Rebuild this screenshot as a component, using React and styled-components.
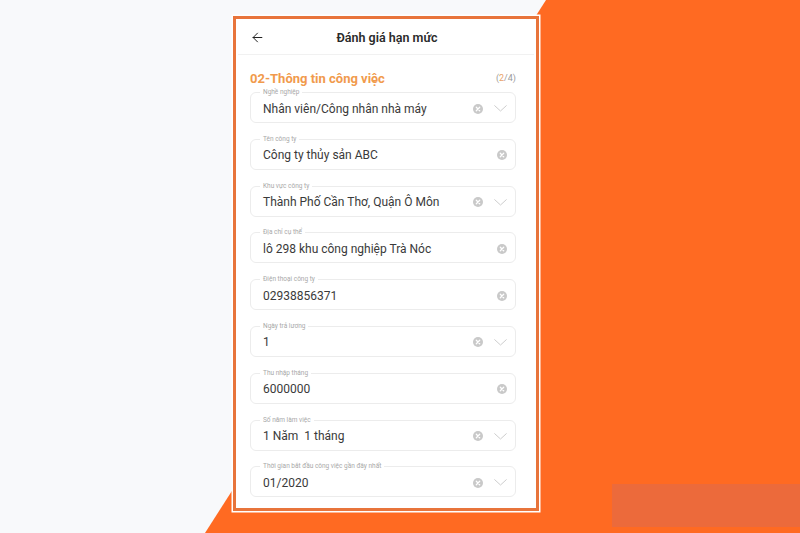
import React from 'react';
import styled, { createGlobalStyle } from 'styled-components';
import { ArrowLeft } from 'lucide-react';

const GlobalStyle = createGlobalStyle`
  html, body {
    margin: 0;
    padding: 0;
    background: #f8f9fb;
  }
  * { box-sizing: border-box; }
`

const fields = [
    { label: 'Nghề nghiệp', value: 'Nhân viên/Công nhân nhà máy', select: true },
    { label: 'Tên công ty', value: 'Công ty thủy sản ABC' },
    { label: 'Khu vực công ty', value: 'Thành Phố Cần Thơ, Quận Ô Môn', select: true },
    { label: 'Địa chỉ cụ thể', value: 'lô 298 khu công nghiệp Trà Nóc' },
    { label: 'Điện thoại công ty', value: '02938856371' },
    { label: 'Ngày trả lương', value: '1', select: true },
    { label: 'Thu nhập tháng', value: '6000000' },
    { label: 'Số năm làm việc', value: '1 Năm  1 tháng', select: true },
    { label: 'Thời gian bắt đầu công việc gần đây nhất', value: '01/2020', select: true },
];

const ClearIcon = () => (
    <svg width="10" height="10" viewBox="0 0 10 10">
        <circle cx="5" cy="5" r="5" fill="#c9c9c9" />
        <path d="M3.3 3.3 L6.7 6.7 M6.7 3.3 L3.3 6.7" stroke="#fff" strokeWidth="1.3" strokeLinecap="round" />
    </svg>
)

const Chevron = () => (
    <svg width="13" height="7" viewBox="0 0 13 7">
        <path d="M0.7 0.7 L6.5 6 L12.3 0.7" fill="none" stroke="#cdcdcd" strokeWidth="1" strokeLinecap="round" />
    </svg>
)

const Field = ({ label, value, select }) => (
    <FieldBox>
        <FieldLabel>{label}</FieldLabel>
        <FieldValue>{value}</FieldValue>
        <Icons>
            <ClearIcon />
            {select && <Chevron />}
        </Icons>
    </FieldBox>
)

const App = () => {
    return (
        <Page>
            <GlobalStyle />
            <Card>
                <Header>
                    <BackButton><ArrowLeft size={15} strokeWidth={1.6} /></BackButton>
                    <Title>Đánh giá hạn mức</Title>
                </Header>
                <Body>
                    <SectionRow>
                        <SectionTitle>02-Thông tin công việc</SectionTitle>
                        <Step>(<span>2</span>/4)</Step>
                    </SectionRow>
                    <FieldList>
                        {fields.map(f => <Field key={f.label} {...f} />)}
                    </FieldList>
                </Body>
            </Card>
            <Patch />
        </Page>
    )
}

export default App;

const Page = styled.div`
    position: relative;
    width: 800px;
    height: 533px;
    overflow: hidden;
    background: #f8f9fb;
    padding: 16px 0 0 233px;
    font-family: Roboto, "Noto Sans", sans-serif;

    &::before {
        content: "";
        position: absolute;
        inset: 0;
        background: #ff6a22;
        clip-path: polygon(546px 0, 800px 0, 800px 533px, 205px 533px);
    }
`

const Patch = styled.div`
    position: absolute;
    left: 612px;
    top: 484px;
    width: 188px;
    height: 43px;
    background: #ec6a3b;
`

const Card = styled.div`
    position: relative;
    z-index: 1;
    width: 306px;
    height: 495px;
    background: #fff;
    border: 3px solid #e8743b;
    box-shadow: 0 0 0 1.5px #fff;
    padding: 1px 2px 0 2px;
    overflow: hidden;
`

const Header = styled.div`
    position: relative;
    height: 35px;
    display: flex;
    align-items: center;
    justify-content: center;
    border-bottom: 1px solid #f1f1f1;
`

const BackButton = styled.div`
    position: absolute;
    left: 12px;
    top: 10px;
    color: #222;
    display: flex;
`

const Title = styled.div`
    font-size: 12.5px;
    font-weight: 600;
    color: #2a2a2a;
    margin-left: 2px;
`

const Body = styled.div`
    padding: 14px 18px 0 12px;
`

const SectionRow = styled.div`
    display: flex;
    align-items: center;
    justify-content: space-between;
    height: 18px;
`

const SectionTitle = styled.div`
    font-size: 13px;
    font-weight: 700;
    color: #f19a4c;
`

const Step = styled.div`
    font-size: 9px;
    color: #9a9a9a;

    span {
        color: #e9a46a;
    }
`

const FieldList = styled.div`
    display: flex;
    flex-direction: column;
    gap: 15.8px;
    margin-top: 5px;
`

const FieldBox = styled.div`
    position: relative;
    height: 31px;
    border: 1px solid #ececec;
    border-radius: 6px;
    display: flex;
    align-items: center;
    padding: 2px 8px 0 12px;
`

const FieldLabel = styled.span`
    position: absolute;
    top: -5px;
    left: 9px;
    padding: 0 3px;
    background: #fff;
    font-size: 6.5px;
    line-height: 8px;
    color: #a8a8a8;
`

const FieldValue = styled.div`
    flex: 1;
    font-size: 12px;
    color: #3a3a3a;
    white-space: pre;
`

const Icons = styled.div`
    display: flex;
    align-items: center;
    gap: 11px;
`
